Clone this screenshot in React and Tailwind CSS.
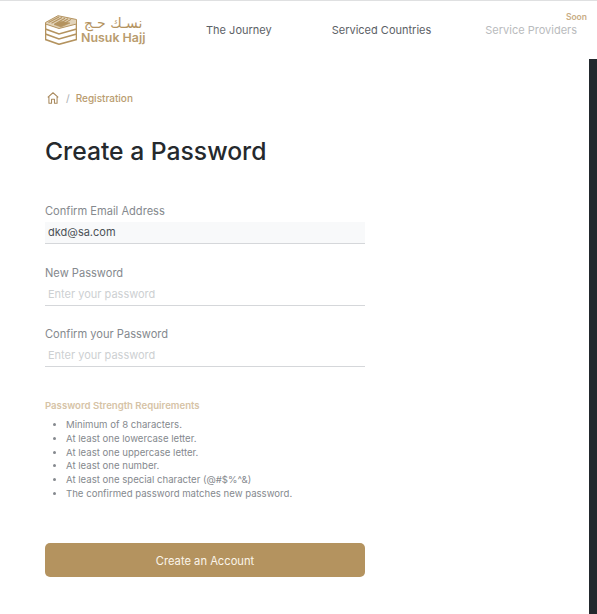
const RULES = [
  'Minimum of 8 characters.',
  'At least one lowercase letter.',
  'At least one uppercase letter.',
  'At least one number.',
  'At least one special character (@#$%^&)',
  'The confirmed password matches new password.',
]

function LogoMark() {
  return (
    <svg width="32" height="30" viewBox="0 0 32 30" fill="none" stroke="#b4935f" className="shrink-0">
      <path d="M0.5 7.5 L13 0.7 L31.5 4.5 V9 L14 13.5 L0.5 9 Z" fill="#e2d3b9" strokeWidth="1" />
      <path d="M3.5 7.5 L14 2 M6.5 8.3 L17 2.6 M9.5 9.2 L20 3.2 M12.5 10.2 L23 3.8 M15 11 L26 4.4" strokeWidth="1.1" />
      <path d="M9 9.5 L16 6.5 L25 8 L16 12 Z" fill="#b4935f" strokeWidth="0.6" />
      <path d="M0.5 9 V14 L14 19 L31.5 14 V9" strokeWidth="1.6" />
      <path d="M0.5 14 V19 L14 24 L31.5 19 V14" strokeWidth="1.6" />
      <path d="M0.5 19 V24.5 L14 29.3 L31.5 24.5 V19" strokeWidth="1.6" />
    </svg>
  )
}

function Field({ label, value, placeholder }) {
  return (
    <div>
      <label className="block text-[11.1px] leading-[14px] text-[#85898e]">{label}</label>
      <div className={`mt-[4px] h-[22px] border-b border-[#d5d7da] px-[3px] text-[11px] leading-[21px] ${value ? 'bg-[#f8f9fa] text-[#4b5157]' : 'text-[#cdd0d2]'}`}>
        {value || placeholder}
      </div>
    </div>
  )
}

export default function App() {
  return (
    <div className="flex h-[614px] flex-col overflow-hidden bg-white font-['Inter',sans-serif]">
      <header className="flex h-[59px] shrink-0 items-center border-t border-[#dfe0e1] pl-[45px] pr-[20px] pt-[1px] text-[11px] text-[#5c6166]">
        <div className="mb-[1px] flex w-[100px] shrink-0 items-center gap-[4px]">
          <LogoMark />
          <div className="flex flex-col">
            <span dir="rtl" className="text-center font-['DejaVu_Sans',sans-serif] text-[14px] leading-[15px] text-[#b4935f]">نسـك حـج</span>
            <span className="whitespace-nowrap text-[12.4px] font-semibold leading-[14px] text-[#b99c6e]">Nusuk Hajj</span>
          </div>
        </div>
        <nav className="ml-[61px] flex flex-1 items-center">
          <a>The Journey</a>
          <a className="ml-[60px]">Serviced Countries</a>
          <a className="relative ml-auto text-[#b9bbbd]">
            Service Providers
            <span className="absolute right-[-10px] top-[-11px] text-[8.5px] font-semibold text-[#c9ad85]">Soon</span>
          </a>
        </nav>
      </header>

      <div className="flex flex-1">
        <main className="flex-1 pl-[45px] pr-[224px]">
          <div className="mt-[31px] flex h-[16px] items-center text-[10px] font-medium text-[#b99c6e]">
            <svg width="14" height="14" viewBox="0 0 24 24" fill="none" stroke="#a98a5e" strokeWidth="1.8" strokeLinejoin="round" className="ml-[1px]">
              <path d="M3 11 L12 3 L21 11 M5 9.5 V21 H9.5 V14 H14.5 V21 H19 V9.5" />
            </svg>
            <span className="ml-[6px] text-[#b4b7ba]">/</span>
            <span className="ml-[6px]">Registration</span>
          </div>
          <h1 className="mt-[30px] text-[24.7px] font-medium leading-[30px] text-[#25292d]">Create a Password</h1>

          <div className="mt-[38px] flex flex-col gap-[21.5px]">
            <Field label="Confirm Email Address" value="dkd@sa.com" />
            <Field label="New Password" placeholder="Enter your password" />
            <Field label="Confirm your Password" placeholder="Enter your password" />
          </div>

          <h2 className="mt-[32px] text-[9.6px] font-semibold leading-[14px] text-[#d6c3a6]">Password Strength Requirements</h2>
          <ul className="mt-[5px] list-disc pl-[21px] text-[9.6px] leading-[13.8px] text-[#85898e]">
            {RULES.map((rule) => (
              <li key={rule}>{rule}</li>
            ))}
          </ul>

          <button className="mt-[42px] h-[34.5px] w-full rounded-[5px] bg-[#b4935f] pt-[2px] text-[11.2px] text-[#fbf5ea]">
            Create an Account
          </button>
        </main>
        <div className="w-[8px] shrink-0 bg-[#22282d]" />
      </div>
    </div>
  )
}
